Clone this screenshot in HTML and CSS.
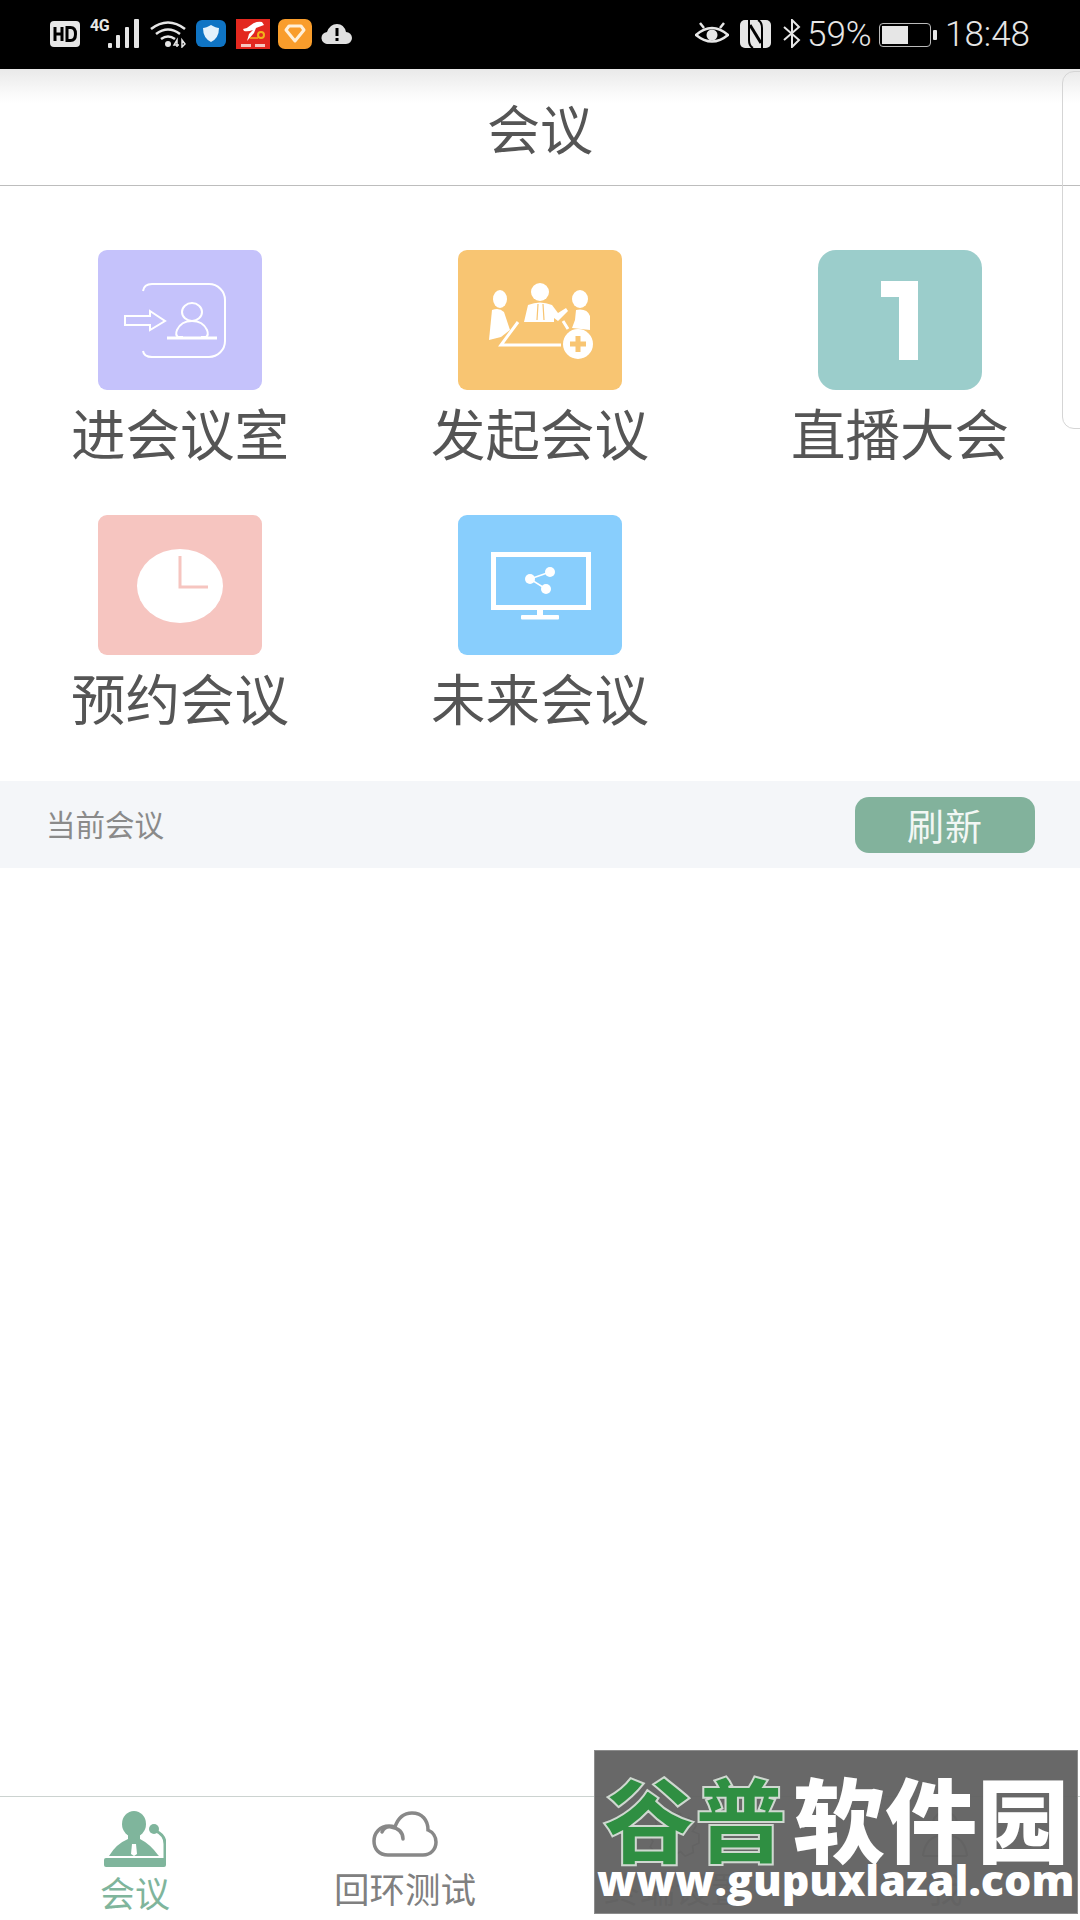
FILE: index.html
```html
<!DOCTYPE html>
<html lang="zh-CN">
<head>
<meta charset="utf-8">
<title>会议</title>
<link rel="stylesheet" href="styles.css">
</head>
<body>
<div class="phone">
  <div class="status">
    <div class="status-left">
      <svg class="i-hd" viewBox="0 0 30 26"><rect width="30" height="26" rx="4" fill="#e6e6e6"/><path d="M5 6v14M5 13h7M12 6v14" stroke="#000" stroke-width="3" fill="none"/><path d="M17 6.500v13h3.500q5 0 5-6.500t-5-6.500z" stroke="#000" stroke-width="3" fill="none"/></svg>
      <span class="net"><span class="net-label">4G</span>
        <svg class="i-signal" viewBox="0 0 33 30"><g fill="#e6e6e6"><rect x="0" y="24" width="4" height="5" rx="1"/><rect x="8" y="16" width="4" height="13" rx="1"/><rect x="17" y="8" width="4" height="21" rx="1"/><rect x="26" y="0" width="5" height="29" rx="1"/></g></svg>
      </span>
      <svg class="i-wifi" viewBox="0 0 36 28"><g fill="none" stroke="#e6e6e6" stroke-width="2.600"><path d="M1 9q17-13 34 0"/><path d="M6 14q12-9 24 0"/><path d="M11 19q7-5 14 0"/></g><circle cx="18" cy="24" r="3" fill="#e6e6e6"/><path d="M27 27v-7l-3 5h5M32 20v7l3-3z" fill="none" stroke="#e6e6e6" stroke-width="1.500"/></svg>
      <svg class="i-app" viewBox="0 0 30 27"><rect width="30" height="27" rx="6" fill="#0f74c4"/><path d="M15 5q5 3 8 3 0 10-8 14-8-4-8-14 3 0 8-3z" fill="#e4f1fb"/></svg>
      <svg class="i-red" viewBox="0 0 34 30"><rect width="34" height="30" fill="#e3281f"/><path d="M7 10q5-1 8-4 5-4 11-3l2 3-8 3-2 5-7 8 2-7 4-4q-5 2-9 1z" fill="#fff"/><circle cx="25" cy="16" r="3" fill="none" stroke="#f2b31b" stroke-width="2"/><path d="M14 19h8" stroke="#f2b31b" stroke-width="1.500"/><rect x="5" y="25" width="10" height="3" fill="#f6c7c0"/><rect x="19" y="25" width="10" height="3" fill="#f6c7c0"/></svg>
      <svg class="i-orange" viewBox="0 0 34 30"><rect width="34" height="30" rx="7" fill="#f99d2b"/><path d="M8 11l3-4h12l3 4-9 11z" fill="none" stroke="#fff0d8" stroke-width="3" stroke-linejoin="round"/></svg>
      <svg class="i-cloud" viewBox="0 0 32 20"><path d="M7 20a6 6 0 0 1-1-12q3-8 10-8t9 8a6 6 0 0 1 0 12z" fill="#e0e0e0"/><rect x="14.500" y="4" width="3" height="8" fill="#000"/><rect x="14.500" y="14" width="3" height="3" fill="#000"/></svg>
    </div>
    <div class="status-right">
      <svg class="i-eye" viewBox="0 0 34 24"><path d="M1 13q16-14 32 0-16 13-32 0z" fill="none" stroke="#e6e6e6" stroke-width="2.500"/><circle cx="17" cy="13" r="5.500" fill="#e6e6e6"/><path d="M5 1l4 5M29 1l-4 5" stroke="#e6e6e6" stroke-width="2.500"/></svg>
      <svg class="i-nfc" viewBox="0 0 31 28"><rect width="31" height="28" rx="5" fill="#e6e6e6"/><path d="M9 0v20q0 6 4 8M22 28V8q0-6-4-8" stroke="#000" stroke-width="2" fill="none"/><path d="M10 5l11 18" stroke="#000" stroke-width="3"/></svg>
      <svg class="i-bt" viewBox="0 0 20 29"><path d="M2 8l15 13-7 7V1l7 7L2 21" fill="none" stroke="#e6e6e6" stroke-width="2"/></svg>
      <span class="pct">59%</span>
      <div class="battery"><div class="battery-body"><div class="battery-fill"></div></div><div class="battery-tip"></div></div>
      <span class="clock">18:48</span>
    </div>
  </div>

  <header class="appbar"><h1 class="appbar-title">会议</h1></header>

  <main class="grid">
    <div class="cell">
      <svg class="tile" viewBox="0 0 164 140"><rect width="164" height="140" rx="9" fill="#c5c2fb"/><g fill="none" stroke="#fff" stroke-width="2"><path d="M45 41q1-7 9-7h57a16 16 0 0 1 16 16v41a16 16 0 0 1-16 16H54q-8 0-9-6"/><path d="M27 66h25v-5l15 10-15 9v-5H27z"/><ellipse cx="94" cy="62" rx="10" ry="9"/><path d="M85 87h-5q-3-2-1-7 4-9 15-9t15 9q2 5-1 7h-5"/></g><path d="M69 88h50" stroke="#fff" stroke-width="3"/></svg>
      <span class="cell-label">进会议室</span>
    </div>
    <div class="cell">
      <svg class="tile" viewBox="0 0 164 140"><rect width="164" height="140" rx="9" fill="#f8c572"/><g fill="#fff"><ellipse cx="42" cy="49" rx="7" ry="9"/><path d="M34 60q7-3 12 2l6 18-9 7-12 3z"/><ellipse cx="82" cy="42" rx="9" ry="9"/><path d="M70 55q12-5 24 0l6 8 8-5 2 3-10 10-4-3v4H66z"/><ellipse cx="122" cy="49" rx="8" ry="9"/><path d="M118 60q11-2 14 6v14l-18-2 3-8z"/><circle cx="120" cy="94" r="15"/></g><path d="M80 54l-1 16M85 54l1 16" stroke="#f8c572" stroke-width="1.200"/><path d="M60 72L43 95h60M105 71l5 8" fill="none" stroke="#fff" stroke-width="3"/><path d="M120 86v16M112 94h16" stroke="#f8c572" stroke-width="5"/></svg>
      <span class="cell-label">发起会议</span>
    </div>
    <div class="cell">
      <svg class="tile" viewBox="0 0 164 140"><rect width="164" height="140" rx="18" fill="#9bcdcb"/><path d="M63 31h37v79H81V47H63z" fill="#fff"/></svg>
      <span class="cell-label">直播大会</span>
    </div>
    <div class="cell">
      <svg class="tile" viewBox="0 0 164 140"><rect width="164" height="140" rx="9" fill="#f6c5c0"/><ellipse cx="82" cy="71" rx="43" ry="37" fill="#fff"/><path d="M82 41v31h28" fill="none" stroke="#f6c5c0" stroke-width="3"/></svg>
      <span class="cell-label">预约会议</span>
    </div>
    <div class="cell">
      <svg class="tile" viewBox="0 0 164 140"><rect width="164" height="140" rx="9" fill="#88cefd"/><rect x="35.500" y="39.500" width="95" height="53" fill="none" stroke="#fff" stroke-width="5"/><path d="M79 95h6v6h-6z" fill="#fff"/><rect x="63" y="100" width="38" height="4.500" rx="1" fill="#fff"/><g fill="#fff"><circle cx="92" cy="57" r="5"/><circle cx="72" cy="64" r="5"/><circle cx="88" cy="74" r="5"/></g><path d="M92 57L72 64 88 74" fill="none" stroke="#fff" stroke-width="1.500"/></svg>
      <span class="cell-label">未来会议</span>
    </div>
  </main>

  <section class="current">
    <span class="current-label">当前会议</span>
    <button class="refresh">刷新</button>
  </section>

  <div class="list"></div>

  <nav class="tabs">
    <div class="tab tab-active">
      <svg class="tab-icon-meet" viewBox="0 0 62 56"><g fill="#7fb59c"><ellipse cx="30" cy="13" rx="12" ry="13"/><path d="M24 22h12v6q10 5 18 16l1 1H5q7-12 19-17z"/><rect y="47" width="62" height="9" rx="2"/><circle cx="50" cy="18" r="5"/></g><path d="M52 20q9 4 9 13v16" fill="none" stroke="#7fb59c" stroke-width="3"/><path d="M28 33h4l1 10-3 2-3-2z" fill="#fff"/></svg>
      <span class="tab-label">会议</span>
    </div>
    <div class="tab">
      <svg class="tab-icon" viewBox="0 0 66 46"><path d="M24 44H16C7 44 2 38 2 30s6-15 15-15q3 0 6 1C26 7 32 2 40 2c10 0 16 7 16 17 5 2 8 7 8 12 0 7-5 13-13 13z" fill="none" stroke="#888" stroke-width="3.500"/><path d="M10 21q3-6 9-5 12 2 12 12" fill="none" stroke="#888" stroke-width="3.500" stroke-linecap="round"/></svg>
      <span class="tab-label">回环测试</span>
    </div>
    <div class="tab">
      <svg class="tab-icon" viewBox="0 0 56 50"><path d="M22 3h12l2 7 7-3 8 9-4 6 7 3v10l-7 3 1 7-9 4-5-5-6 4h-8l-5-5-7 4-7-8 3-6-3-5V18l7-1-1-7 8-3z" fill="none" stroke="#888" stroke-width="2"/></svg>
      <span class="tab-label">终端设置</span>
    </div>
    <div class="tab">
      <svg class="tab-icon" viewBox="0 0 52 50"><circle cx="26" cy="14" r="13" fill="none" stroke="#888" stroke-width="2.500"/><path d="M2 49q2-18 16-22M50 49q-2-18-16-22M2 49h48" fill="none" stroke="#888" stroke-width="2.500"/></svg>
      <span class="tab-label">我</span>
    </div>
  </nav>

  <div class="side-panel"></div>
  <div class="watermark">
    <div class="wm-title"><span class="wm-green">谷普</span><span class="wm-white">软件园</span></div>
    <div class="wm-url">www.gupuxlazal.com</div>
  </div>
</div>
</body>
</html>
```
FILE: styles.css
```css
* { box-sizing: border-box; }
html, body { margin: 0; padding: 0; }
body { font-family: "Noto Sans CJK SC", "Noto Sans", sans-serif; background: #fff; }

.phone {
  position: relative;
  width: 1080px;
  height: 1920px;
  overflow: hidden;
  display: flex;
  flex-direction: column;
  background: #fff;
}

.status {
  flex: 0 0 69px;
  background: #000;
  display: flex;
  justify-content: space-between;
  align-items: center;
  padding: 0 50px 2px;
  color: #e6e6e6;
  font-family: Roboto, sans-serif;
}
.status-left, .status-right { display: flex; align-items: center; }
.status-left svg, .status-right svg { display: block; flex: none; }
.i-hd { width: 30px; height: 26px; margin-right: 10px; }
.net { display: flex; align-items: flex-end; margin-right: 9px; height: 30px; }
.net-label { font-size: 16px; font-weight: 700; line-height: 14px; align-self: flex-start; width: 18px; letter-spacing: -0.500px; }
.i-signal { width: 33px; height: 30px; }
.i-wifi { width: 36px; height: 28px; margin-right: 10px; }
.i-app { width: 30px; height: 27px; margin-right: 10px; }
.i-red { width: 34px; height: 30px; margin-right: 8px; }
.i-orange { width: 34px; height: 30px; margin-right: 9px; }
.i-cloud { width: 32px; height: 20px; }
.i-eye { width: 34px; height: 24px; margin-right: 11px; }
.i-nfc { width: 31px; height: 28px; margin-right: 11px; }
.i-bt { width: 20px; height: 29px; margin-right: 5px; }
.pct { font-size: 35px; line-height: 36px; width: 62px; margin-right: 10px; margin-top: 3px; white-space: nowrap; font-weight: 300; }
.battery { display: flex; align-items: center; margin-right: 8px; margin-top: 2px; }
.battery-body { width: 52px; height: 24px; border: 1.500px solid #bbb; border-radius: 4px; padding: 2px; }
.battery-fill { width: 26px; height: 100%; background: #e6e6e6; }
.battery-tip { width: 4px; height: 10px; margin-left: 2px; background: #e6e6e6; border-radius: 1px; }
.clock { font-size: 35px; line-height: 36px; font-weight: 300; margin-top: 3px; }

.appbar {
  flex: 0 0 117px;
  border-bottom: 1px solid #bdbdbd;
  background: linear-gradient(#e9e9e9 0, #fbfbfb 26px, #fff 34px);
  display: flex;
  justify-content: center;
  align-items: center;
}
.appbar-title { margin: 0; font-size: 53px; line-height: 72px; font-weight: 400; color: #555; }

.grid {
  display: grid;
  grid-template-columns: repeat(3, 360px);
  grid-auto-rows: 230px;
  row-gap: 35px;
  padding: 64px 0 36px;
}
.cell { display: flex; flex-direction: column; align-items: center; }
.tile { display: block; width: 164px; height: 140px; flex: none; }
.cell-label { font-size: 54.500px; line-height: 84px; color: #555; white-space: nowrap; }

.current {
  flex: 0 0 87px;
  background: #f4f6f9;
  display: flex;
  justify-content: space-between;
  align-items: center;
  padding: 0 45px 0 46px;
}
.current-label { font-size: 29.500px; line-height: 40px; color: #8a8a8a; white-space: nowrap; margin-bottom: 4px; }
.refresh {
  width: 180px;
  height: 56px;
  border: 0;
  padding: 0;
  border-radius: 14px;
  background: #82b29c;
  color: #f2f7f4;
  font: 400 37px/52px "Noto Sans CJK SC", sans-serif;
  letter-spacing: 1px;
}

.list { flex: 1; background: #fff; }

.tabs {
  flex: 0 0 124px;
  border-top: 1.500px solid #ccd3d0;
  display: grid;
  grid-template-columns: repeat(4, 270px);
}
.tab { display: flex; flex-direction: column; align-items: center; padding-top: 14px; color: #808080; }
.tab-icon { display: block; width: 66px; height: 46px; margin-bottom: 9px; }
.tab-icon-meet { display: block; width: 62px; height: 56px; }
.tab-label { font-size: 35.500px; line-height: 44px; white-space: nowrap; }
.tab-active { color: #7fb59c; }
.tab-active .tab-label { margin-top: 3px; font-size: 35px; }

.side-panel {
  position: absolute;
  right: -20px;
  top: 71px;
  width: 38px;
  height: 358px;
  border: 1.500px solid #d5d5d5;
  border-radius: 12px;
  background: transparent;
}

.watermark {
  position: absolute;
  left: 594px;
  top: 1750px;
  width: 484px;
  height: 164px;
  background: rgba(98, 98, 98, 0.96);
  border: 1px solid #8c8c8c;
  overflow: hidden;
}
.wm-title {
  display: flex;
  gap: 6px;
  margin: 10px 0 0 8px;
  font-size: 92px;
  line-height: 110px;
  font-weight: 900;
  white-space: nowrap;
}
.wm-green { color: #2f8f42; -webkit-text-stroke: 2px #cfd8d0; }
.wm-white { color: #fff; }
.wm-url {
  margin: -16px 0 0 2px;
  font-family: "Open Sans", sans-serif;
  font-size: 43px;
  line-height: 50px;
  font-weight: 800;
  color: #fff;
  white-space: nowrap;
}
```
